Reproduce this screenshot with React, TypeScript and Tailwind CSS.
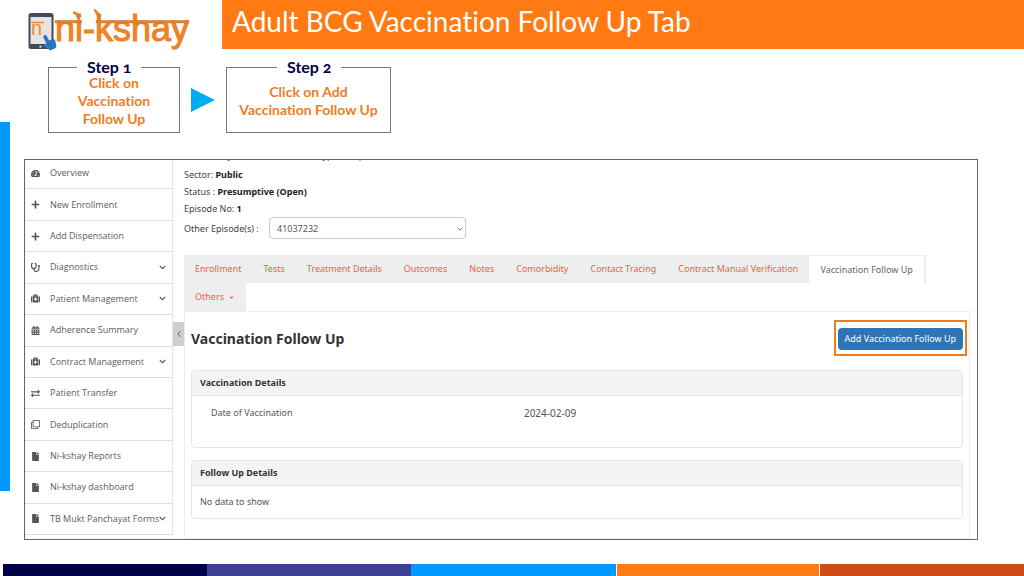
import React, { useState } from 'react';
import {
  FaTachometerAlt,
  FaPlus,
  FaStethoscope,
  FaMedkit,
  FaCalendarAlt,
  FaExchangeAlt,
  FaRegClone,
  FaFile,
  FaChevronDown,
  FaCaretDown,
} from 'react-icons/fa';
import { ChevronLeft, ChevronDown } from 'lucide-react';
import type { IconType } from 'react-icons';

// ─── Data ────────────────────────────────────────────────────────────────────

type MenuItem = { label: string; icon: IconType; expandable?: boolean };

const MENU: MenuItem[] = [
  { label: 'Overview', icon: FaTachometerAlt },
  { label: 'New Enrollment', icon: FaPlus },
  { label: 'Add Dispensation', icon: FaPlus },
  { label: 'Diagnostics', icon: FaStethoscope, expandable: true },
  { label: 'Patient Management', icon: FaMedkit, expandable: true },
  { label: 'Adherence Summary', icon: FaCalendarAlt },
  { label: 'Contract Management', icon: FaMedkit, expandable: true },
  { label: 'Patient Transfer', icon: FaExchangeAlt },
  { label: 'Deduplication', icon: FaRegClone },
  { label: 'Ni-kshay Reports', icon: FaFile },
  { label: 'Ni-kshay dashboard', icon: FaFile },
  { label: 'TB Mukt Panchayat Forms', icon: FaFile, expandable: true },
];

const TABS = [
  'Enrollment',
  'Tests',
  'Treatment Details',
  'Outcomes',
  'Notes',
  'Comorbidity',
  'Contact Tracing',
  'Contract Manual Verification',
  'Vaccination Follow Up',
  'Others',
];

// ─── Slide parts ─────────────────────────────────────────────────────────────

function Logo() {
  return (
    <svg viewBox="0 0 166 46" className="w-[166px] h-[46px] overflow-visible" role="img" aria-label="ni-kshay">
      {/* tablet */}
      <rect x="0.5" y="5" width="25" height="36" rx="2.5" fill="#434a5c" />
      <rect x="2.5" y="9" width="21" height="27" fill="#e6e3e1" />
      <circle cx="12.5" cy="38.6" r="1.2" fill="#cfd3da" />
      <path d="M3.5 14.5H16" stroke="#f08a35" strokeWidth="1.6" />
      <text x="3" y="27" fontSize="20" fill="#f08a35" fontFamily="Liberation Sans, sans-serif">n</text>
      {/* pointing hand */}
      <path
        d="M16 27.5c1-.9 2.200-.4 2.700.6l2.300 4.200 4.200-1c1-.2 1.700.2 2 1.200l1.100 5.200c.2 1.200-.2 2-1.100 2.500l-3.700 1.800c-1 .4-1.900.2-2.700-.4l-4.900-3.700c-1.300-1-.3-2.600 1.100-2.200l1.700.6-3.200-6.600c-.3-.8-.2-1.600.5-2.200z"
        fill="#2f74c4"
      />
      {/* word mark with its headline bar */}
      <text
        x="27"
        y="33"
        fontSize="36"
        fontFamily="Liberation Sans, sans-serif"
        fill="#f5821f"
        stroke="#ee8025"
        strokeWidth="1"
      >
        ni-kshay
      </text>
      <g stroke="#8a6a4a" strokeWidth="0.4" fill="#f5821f">
        <path d="M27 12.500H53.500V14.900H27zM68 12.500H160.500L159 14.900H68z" />
        <path d="M45.500 3.500c4.500 1 6.500 3.500 6.500 8l-2.500.6c.2-3.200-1.200-5.200-4-6.500z" />
        <path d="M66 1c2 1 4.500 2.500 5.300 5.500l-1.600 2.500c-.8-2.600-3.300-4.600-3.700-8z" />
      </g>
    </svg>
  );
}

type StepProps = { title: string; width: string; legend: string; children: React.ReactNode };

function Step({ title, width, legend, children }: StepProps) {
  return (
    <fieldset className={`${width} border border-[#777] font-bold oldstyle-nums`}>
      <legend className={`${legend} px-2.5 text-base leading-5 text-[#000048]`}>{title}</legend>
      <p className="flex h-[55px] items-center justify-center pb-2 text-center text-sm leading-[18px] text-[#f07c1c]">
        <span>{children}</span>
      </p>
    </fieldset>
  );
}

// ─── Application parts ───────────────────────────────────────────────────────

function Sidebar() {
  return (
    <nav className="-mt-0.5 mb-1 flex w-[148px] shrink-0 flex-col border-r border-[#e4e4e4] font-['Open_Sans',sans-serif]">
      {MENU.map(({ label, icon: Icon, expandable }) => (
        <a
          key={label}
          href="#"
          className="flex flex-1 items-center border-b border-[#dedede] px-1.5 text-[9px] leading-3 text-[#5c5c5c]"
        >
          <Icon className="mr-2.5 size-[9px] shrink-0 text-[#555]" />
          <span className="flex-1 whitespace-nowrap">{label}</span>
          {expandable && <FaChevronDown className="size-[7px] shrink-0 text-[#444]" />}
        </a>
      ))}
    </nav>
  );
}

function Tabs() {
  const [active, setActive] = useState('Vaccination Follow Up');

  return (
    <div role="tablist" className="mt-4 flex flex-wrap">
      {TABS.map((tab) => (
        <button
          key={tab}
          role="tab"
          aria-selected={tab === active}
          onClick={() => setActive(tab)}
          className={`flex h-7 items-center gap-1 whitespace-nowrap px-[11px] text-[9px] ${
            tab === active
              ? 'border-r-2 border-t border-[#ececec] bg-white text-[#666]'
              : 'bg-[#eeeeee] text-[#e8644c]'
          }`}
        >
          {tab}
          {tab === 'Others' && <FaCaretDown className="size-[7px]" />}
        </button>
      ))}
    </div>
  );
}

function Card({ title, children }: { title: string; children: React.ReactNode }) {
  return (
    <section className="mb-3 rounded-sm border border-[#e6e6e6]">
      <h3 className="border-b border-[#e6e6e6] bg-[#f4f4f4] px-2 text-[9px] font-bold leading-6 text-[#333]">
        {title}
      </h3>
      {children}
    </section>
  );
}

function PatientInfo() {
  return (
    <div className="text-[9px] leading-[17px] text-[#444]">
      {/* scrolled mostly out of view */}
      <p className="-mt-3 h-[18px] leading-4">Test Facility: Central Clinic 0012 Type: Hosp</p>
      <p>Sector: <b className="text-[#222]">Public</b></p>
      <p>Status : <b className="text-[#222]">Presumptive (Open)</b></p>
      <p>Episode No: <b className="text-[#222]">1</b></p>
      <div className="flex items-center">
        <label htmlFor="episode" className="w-[85px]">Other Episode(s) :</label>
        <div className="relative">
          <select
            id="episode"
            className="block h-[22px] w-[197px] appearance-none rounded-sm border border-[#ccc] bg-white px-[7px] text-[9px] text-[#555]"
          >
            <option>41037232</option>
          </select>
          <ChevronDown className="pointer-events-none absolute right-0.5 top-2 size-2 text-[#444]" />
        </div>
      </div>
    </div>
  );
}

export default function App() {
  return (
    <div className="flex min-h-screen flex-col bg-white font-['Lato',sans-serif] [font-variant-ligatures:none]">
      <header className="flex h-[49px] items-start">
        <div className="w-[222px] shrink-0 pl-7 pt-2">
          <Logo />
        </div>
        <h1 className="h-full flex-1 bg-[#ff7a12] pl-2.5 text-[28px] leading-[42px] text-white">
          Adult BCG Vaccination Follow Up Tab
        </h1>
      </header>

      <div className="flex flex-1">
        <div className="my-[73px] w-2.5 shrink-0 bg-[#0099ff]" />

        <main className="ml-3.5 mr-[46px] flex min-w-0 flex-1 flex-col">
          <div className="flex items-start pb-[26px] pl-6 pt-2">
            <Step title="Step 1" width="w-[132px]" legend="ml-7">
              Click on<br />Vaccination<br />Follow Up
            </Step>
            <svg viewBox="0 0 24 24" className="mx-[11px] mt-[31px] size-6" aria-hidden="true">
              <path d="M0 0L24 12L0 24z" fill="#00aeef" />
            </svg>
            <Step title="Step 2" width="w-[165px]" legend="ml-[50px]">
              Click on Add<br />Vaccination Follow Up
            </Step>
          </div>

          <div className="flex overflow-hidden border border-[#666] font-['Noto_Sans',sans-serif]">
            <Sidebar />
            <div className="w-[11px] shrink-0">
              <button
                aria-label="Collapse menu"
                className="mt-[162px] flex h-6 w-full items-center justify-center bg-[#cfcfcf] text-[#444]"
              >
                <ChevronLeft className="size-2.5" />
              </button>
            </div>

            <div className="min-w-0 flex-1 pr-[7px]">
              <PatientInfo />
              <Tabs />
              <div className="border border-[#ececec] px-1.5 pb-[7px]">
                <div className="mb-5 flex items-center justify-between pt-4">
                  <h2 className="text-sm font-bold leading-[22px] text-[#333]">Vaccination Follow Up</h2>
                  <div className="relative">
                    <button className="block h-[22px] rounded-sm bg-[#2f75b5] px-[7px] text-[9px] text-white">
                      Add Vaccination Follow Up
                    </button>
                    <div className="pointer-events-none absolute -bottom-1.5 -left-1 -right-1 -top-2 border-2 border-[#f07c1c]" />
                  </div>
                </div>
                <Card title="Vaccination Details">
                  <dl className="grid h-[51px] grid-cols-12 pl-[19px] pt-[7px] text-[9px] leading-5 text-[#555]">
                    <dt className="col-span-5">Date of Vaccination</dt>
                    <dd className="col-span-7 text-[10px]">2024-02-09</dd>
                  </dl>
                </Card>
                <Card title="Follow Up Details">
                  <p className="px-2 py-2 text-[9px] leading-4 text-[#555]">No data to show</p>
                </Card>
              </div>
            </div>
          </div>
        </main>
      </div>

      <footer className="ml-[3px] grid h-3 grid-cols-5">
        <div className="bg-[#000048]" />
        <div className="bg-[#3e4095]" />
        <div className="bg-[#0099ff]" />
        <div className="border-x border-white bg-[#ff7a12]" />
        <div className="bg-[#cf4b15]" />
      </footer>
    </div>
  );
}
